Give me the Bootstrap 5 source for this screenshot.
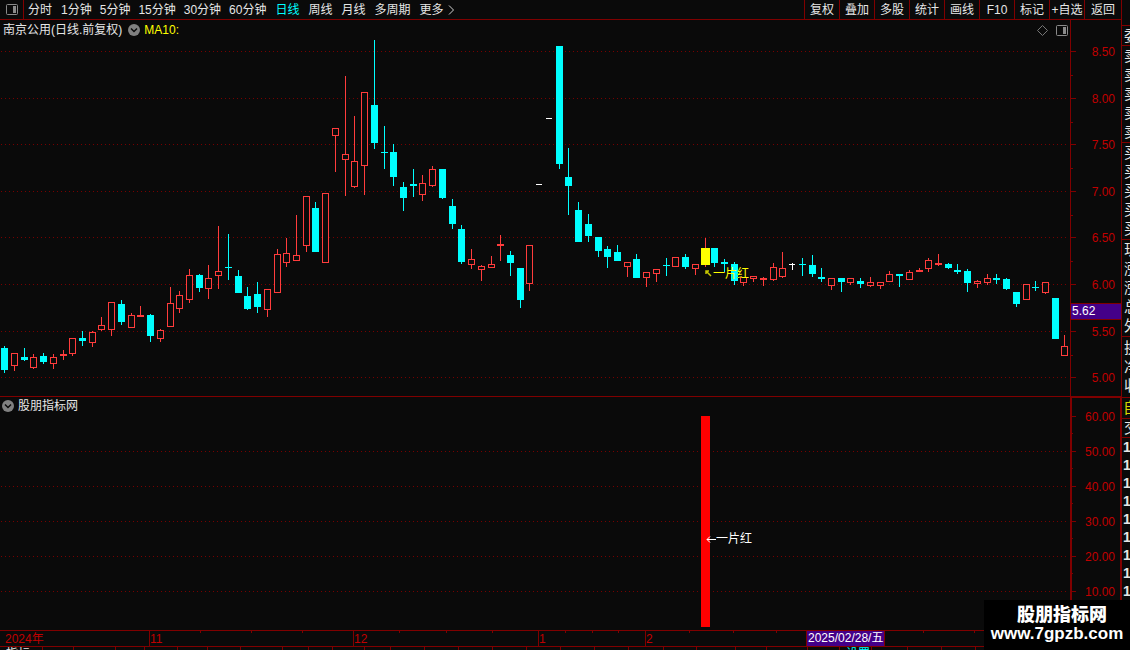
<!DOCTYPE html>
<html lang="zh-CN">
<head>
<meta charset="utf-8">
<meta name="viewport" content="width=device-width, initial-scale=1">
<title>南京公用 日线</title>
<link href="https://cdn.jsdelivr.net/npm/bootstrap@5.3.0/dist/css/bootstrap.min.css" rel="stylesheet">
<style>
:root { --line: #800000; --ink: #e6e6e6; --axis: #c00000; --bg: #0a0a0a; }
body { background: var(--bg); color: var(--ink); font: 12px/18px "Liberation Sans", "Noto Sans CJK SC", sans-serif; }
button { background: none; border: 0; padding: 0; color: inherit; font: inherit; white-space: nowrap; }
.topbar { height: 20px; border-bottom: 1px solid var(--line); }
.pane-toggle { width: 24px; border-right: 1px solid var(--line); }
.periods { gap: 9px; padding-left: 4px; }
.minutes { gap: 8px; }
.periods .current { color: #00ffff; }
.tools button { width: 35px; border-left: 1px solid var(--line); }
.tools button:last-child { width: 37px; }
.price-pane { flex: 376 1 376px; min-height: 0; }
.volume-pane { flex: 234 1 234px; min-height: 0; border-top: 1px solid var(--line); }
.chart { width: 100%; height: 100%; display: block; }
.chart text { font-size: 12px; }
.pane-head { top: 0; left: 3px; right: 53px; height: 20px; }
.volume-pane .pane-head { left: 2px; height: 18px; }
.price-pane .pane-head button { margin: 0 4px 0 6px; }
.ma { color: #ffff00; }
.dates { height: 16px; border-top: 1px solid var(--line); flex: none; }
.tabs { height: 4px; border-top: 1px solid var(--line); flex: none; }
.tabs > * { border-right: 1px solid var(--line); line-height: 14px; height: 14px; flex: none; text-align: left; padding-left: 6px; }
.tabs .alert-tab { color: #00ffff; }
.quotes { width: 9px; flex: none; border-left: 1px solid var(--line); line-height: 19px; font-size: 15px; padding-top: 25px; }
.quotes div { border-top: 1px solid var(--line); padding-left: 2px; white-space: nowrap; }
.quotes .five { height: 97px; }
.quotes .three { height: 61px; padding-top: 1px; }
.quotes .pick { color: #d8d800; padding-left: 1px; height: 21px; }
.quotes .one { height: 19px; line-height: 18px; }
.quotes .ticks { line-height: 18px; font-size: 14px; font-weight: 700; padding-left: 1px; }
.brand { right: 0; bottom: 0; width: 146px; height: 50px; background: #000; color: #fff; font-weight: 700; padding-top: 5px; }
.brand b { font-size: 18px; line-height: 20px; padding-left: 10px; }
.brand span { font-size: 17px; line-height: 17px; }
</style>
</head>
<body class="vh-100 overflow-hidden d-flex position-relative">
<main class="d-flex flex-column flex-grow-1 overflow-hidden">
  <header class="topbar d-flex flex-shrink-0">
    <button class="pane-toggle d-flex align-items-center justify-content-center" aria-label="侧栏">
      <svg width="12" height="11" viewBox="0 0 12 11"><rect x=".5" y=".5" width="11" height="10" rx="1" fill="none" stroke="#8a8a8a"/><path d="M7 2h3v7H7z" fill="#8a8a8a"/></svg>
    </button>
    <nav class="periods d-flex flex-grow-1 align-items-center">
      <button>分时</button>
      <div class="minutes d-flex"><button>1分钟</button><button>5分钟</button><button>15分钟</button><button>30分钟</button><button>60分钟</button></div>
      <button class="current">日线</button><button>周线</button><button>月线</button><button>多周期</button>
      <button class="d-flex align-items-center gap-1">更多<svg width="7" height="10" viewBox="0 0 7 10"><path d="M1 .5 5.500 5 1 9.500" fill="none" stroke="#d0d0d0"/></svg></button>
    </nav>
    <div class="tools d-flex">
      <button>复权</button><button>叠加</button><button>多股</button><button>统计</button><button>画线</button><button>F10</button><button>标记</button><button>+自选</button><button>返回</button>
    </div>
  </header>
  <section class="price-pane position-relative overflow-hidden">
    <svg class="chart" id="price"></svg>
    <div class="pane-head position-absolute d-flex align-items-center">
      <span>南京公用(日线.前复权)</span>
      <button class="d-flex" aria-label="菜单"><svg width="12" height="12" viewBox="0 0 12 12"><circle cx="6" cy="6" r="6" fill="#808080"/><path d="M3 4.500 6 7.500 9 4.500" fill="none" stroke="#0a0a0a" stroke-width="1.500"/></svg></button>
      <span class="ma">MA10:</span>
      <span class="ms-auto d-flex gap-2 align-items-center">
        <svg width="11" height="11" viewBox="0 0 11 11"><path d="M5.500.5l5 5-5 5-5-5z" fill="none" stroke="#777"/></svg>
        <svg width="12" height="11" viewBox="0 0 12 11"><rect x=".5" y=".5" width="11" height="10" rx="1" fill="none" stroke="#8a8a8a"/><path d="M7 2h3v7H7z" fill="#8a8a8a"/></svg>
      </span>
    </div>
  </section>
  <section class="volume-pane position-relative overflow-hidden">
    <svg class="chart" id="signal"></svg>
    <div class="pane-head position-absolute d-flex align-items-center gap-1">
      <button class="d-flex" aria-label="菜单"><svg width="12" height="12" viewBox="0 0 12 12"><circle cx="6" cy="6" r="6" fill="#808080"/><path d="M3 4.500 6 7.500 9 4.500" fill="none" stroke="#0a0a0a" stroke-width="1.500"/></svg></button>
      <span>股朋指标网</span>
    </div>
  </section>
  <div class="dates"><svg class="chart" id="dates"></svg></div>
  <div class="tabs d-flex overflow-hidden" id="tabs"></div>
</main>
<aside class="quotes overflow-hidden">
  <div>委</div>
  <div class="five">卖<br>卖<br>卖<br>卖<br>卖</div>
  <div class="five">买<br>买<br>买<br>买<br>买</div>
  <div class="five">现<br>涨<br>涨<br>总<br>外</div>
  <div class="three">换<br>净<br>收</div>
  <div class="pick">自</div>
  <div class="one">交</div>
  <div class="ticks">1<br>1<br>1<br>1<br>1<br>1<br>1<br>1<br>1</div>
</aside>
<div class="brand position-absolute d-flex flex-column align-items-center"><b>股朋指标网</b><span>www.7gpzb.com</span></div>

<script src="https://cdn.jsdelivr.net/npm/bootstrap@5.3.0/dist/js/bootstrap.bundle.min.js"></script>
<script>
// kind (c falling, r rising, w flat, y signal), high, body top, body bottom, low
const days = `c 346 348 370 373|r 353 353 366 371|c 348 357 360 361|r 354 357 368 369|c 353 356 362 364|r 354 357 364 369|r 350 354 356 360|r 338 338 354 356|c 331 338 341 346|r 331 332 343 347
r 317 325 330 331|r 302 302 330 336|c 300 304 322 325|r 313 315 328 328|r 306 315 317 317|c 314 315 336 342|r 329 330 339 342|r 287 303 327 327|r 291 295 309 313|r 269 275 300 303
c 274 275 288 292|r 265 278 289 299|r 226 271 276 289|c 234 267 268 280|c 270 276 293 293|c 287 296 309 310|c 282 294 307 313|r 289 289 310 317|r 249 254 293 293|r 238 253 263 267
r 215 255 261 261|r 196 196 246 252|c 202 208 252 252|r 193 193 263 263|r 128 128 136 172|r 76 154 160 196|r 116 161 187 188|r 92 92 166 195|c 40 105 143 149|c 126 152 153 169
c 144 152 177 186|c 182 187 198 211|c 169 184 186 197|r 175 183 195 201|r 166 169 186 187|c 169 169 198 199|c 199 206 224 229|c 225 229 262 264|r 249 259 265 269|r 265 266 270 281
r 256 264 268 268|r 235 244 246 261|c 251 255 263 276|c 268 268 300 308|r 245 245 284 291|w 184 184 185 185|w 118 118 119 119|c 46 46 164 169|c 148 177 186 215|c 202 210 242 242
c 214 224 236 242|c 237 237 251 257|c 246 249 257 268|c 245 252 261 261|r 262 262 267 277|c 254 259 278 278|r 272 272 278 287|r 269 269 274 282|c 258 265 266 276|r 257 257 267 267
c 254 257 267 269|r 264 264 269 275|y 238 248 265 267|c 248 248 263 267|c 259 262 264 272|c 262 264 281 285|r 277 277 283 286|r 276 276 279 282|r 277 278 280 286|r 263 267 280 281
r 252 268 277 278|w 263 264 265 270|c 258 264 265 276|c 255 265 274 277|c 268 277 279 282|r 278 278 286 290|c 278 278 282 292|r 278 278 283 285|c 278 281 284 288|r 277 282 286 287
r 282 282 286 289|r 271 274 282 282|c 274 274 276 287|r 270 272 280 280|r 268 270 272 272|r 258 260 269 272|r 254 263 265 266|c 263 264 268 269|c 264 270 272 274|c 269 271 283 292
r 280 281 284 288|r 274 278 283 285|c 274 278 280 284|c 278 279 289 290|c 292 292 304 307|r 284 284 300 300|c 281 287 288 291|r 282 282 293 294|c 298 298 339 339|r 335 346 356 356`
  .split(/[|\n]/).map(s => { const [k, ...v] = s.trim().split(' '); return [k, ...v.map(n => n - 20)]; });
const ink = { c: '#00ffff', r: '#ff3c3c', w: '#ffffff', y: '#ffff00' };
const rect = (x, y, w, h, f) => `<rect x="${x}" y="${y}" width="${w}" height="${h}" fill="${f}"/>`;
const box = (x, y, w, h) => `<rect x="${x + .5}" y="${y + .5}" width="${w - 1}" height="${h - 1}" fill="#0a0a0a" stroke="#ff3c3c"/>`;
const text = (x, y, s, f, a) => `<text x="${x}" y="${y}" fill="${f}" text-anchor="${a || 'start'}">${s}</text>`;
const dots = (y, w) => `<path d="M1 ${y + .5}H${w - 1}" stroke="#780000" stroke-dasharray="1 3"/>`;
const get = id => document.getElementById(id);

function draw() {
  const price = get('price'), W = price.clientWidth, H = price.clientHeight, ax = W - 51;
  const X = i => Math.floor(4.66 + i * ax / 110);
  const ky = H / 376, Y = v => Math.round(v * ky);
  let s = '';
  [31, 78, 124, 171, 217, 264, 311, 357].forEach((v, i) => {
    const y = Y(v);
    s += dots(y, ax) + rect(ax, y, 6, 1, '#800000') + text(ax + 45, y + 5, (8.5 - i * .5).toFixed(2), '#c00000', 'end');
    if (i < 7) s += rect(ax, Y(v + 24), 3, 1, '#800000');
  });
  s += rect(ax, 0, 1, H, '#800000');
  days.forEach(([k, hi, t, b, lo], i) => {
    const x = X(i), c = ink[k], y = Y(t), h = Math.max(1, Y(b) - y);
    s += rect(x, Y(hi), 1, Y(lo) - Y(hi), k == 'y' ? ink.r : c);
    if (k == 'r' && h > 2) s += box(x - 3, y, 7, h);
    else if (k == 'y') s += rect(x - 4, y, 9, h, c);
    else s += rect(x - 3, y, k == 'w' ? 6 : 7, h, c);
  });
  const sx = X(72);
  s += `<path d="M${sx + 1} ${Y(250) + 4}v-3h3M${sx + 1} ${Y(250) + 1}l5 5" fill="none" stroke="#c8c800" stroke-width="1.500"/>` + text(sx + 8, Y(258), '一片红', '#ffff00');
  s += rect(ax + 1, Y(283), 50, 17, '#800000') + rect(ax + 1, Y(283) + 1, 50, 15, '#440088') + text(ax + 2, Y(283) + 12, '5.62', '#ffffff');
  price.innerHTML = s;

  const sig = get('signal'), h2 = sig.clientHeight, k2 = h2 / 233, Z = v => Math.round(v * k2);
  s = '';
  for (let i = 0; i < 6; i++) {
    const y = Z(19 + i * 35);
    if (i) s += dots(y, ax);
    s += rect(ax, y, 6, 1, '#800000') + rect(ax, Z(36 + i * 35), 3, 1, '#800000') + text(ax + 45, y + 5, (60 - i * 10) + '.00', '#c00000', 'end');
  }
  s += rect(ax, 0, 2, h2, '#800000') + rect(W - 1, 0, 1, h2, '#800000') + rect(ax, 0, 51, 1, '#800000');
  s += rect(sx - 4, Z(19), 9, Z(230) - Z(19), '#ff0000');
  s += `<path d="M${sx + 11} ${Z(142) + .5}H${sx + 2}m3 -3l-3 3 3 3" fill="none" stroke="#fff"/>` + text(sx + 11, Z(142) + 4, '一片红', '#ffffff');
  sig.innerHTML = s;

  s = text(5, 12, '2024年', '#c00000');
  [[15, '11'], [36, '12'], [55, '1'], [66, '2']].forEach(([i, t]) => s += rect(X(i) - 1, 0, 1, 15, '#800000') + text(X(i), 12, t, '#c00000'));
  [200, 251, 302, 399, 446, 492, 565, 592, 618, 689, 733, 776, 923, 974, 1025].forEach(x => s += rect(Math.round(x * ax / 1070), 0, 1, 2, '#800000'));
  const dx = Math.round(806 * ax / 1070);
  s += rect(dx, 0, 79, 15, '#800000') + rect(dx + 1, 0, 77, 15, '#440088') + text(dx + 2, 11, '2025/02/28/五', '#ffffff');
  get('dates').innerHTML = s;
}
const tabWidths = [43, 31, 42, 29, 33, 30, 33, 42, 26, 24, 32, 26, 34, 34, 34, 34, 34, 34, 34, 35, 33, 39, 31, 41, 32, 32, 36, 34, 34, 34];
get('tabs').innerHTML = tabWidths.map((w, i) =>
  i == 0 ? `<button style="width:${w}px">指标</button>` :
  i == 25 ? `<button class="alert-tab" style="width:${w}px">设置</button>` : `<span style="width:${w}px"></span>`).join('');
addEventListener('resize', draw);
draw();
</script>
</body>
</html>
